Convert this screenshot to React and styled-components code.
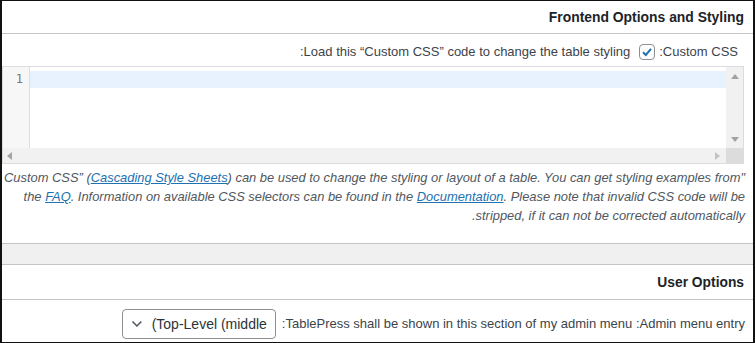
import React from "react";
import styled, { createGlobalStyle } from "styled-components";

const GlobalStyle = createGlobalStyle`
  html, body {
    margin: 0;
    padding: 0;
    background: #fff;
  }
  body {
    font-family: "Liberation Sans", Arial, sans-serif;
    color: #3c434a;
  }
`;

const Frame = styled.div`
  width: 755px;
  height: 343px;
  box-sizing: border-box;
  border: 1px solid #111;
  border-left-width: 2px;
  border-right-width: 2px;
  background: #fff;
  overflow: hidden;
  display: flex;
  flex-direction: column;
`;

const SectionHeader = styled.div`
  height: ${(p) => p.$height}px;
  flex: none;
  display: flex;
  align-items: center;
  justify-content: flex-end;
  padding-right: 9px;
  border-bottom: 1px solid #c3c4c7;
  font-size: ${(p) => p.$size}px;
  font-weight: bold;
  color: #1d2327;
  white-space: nowrap;
  box-sizing: border-box;
`;

const OptionRow = styled.div`
  height: ${(p) => p.$height}px;
  flex: none;
  display: flex;
  align-items: center;
  justify-content: flex-end;
  padding: ${(p) => p.$top}px ${(p) => p.$right}px 0 0;
  font-size: 13px;
  color: #3c434a;
  white-space: nowrap;
  box-sizing: border-box;
`;

const Check = styled.span`
  flex: none;
  width: 14px;
  height: 14px;
  margin: 0 4px 0 9px;
  border: 1px solid #8c8f94;
  border-radius: 4px;
  display: inline-flex;
  align-items: center;
  justify-content: center;
  background: #fff;
`;

const Editor = styled.div`
  flex: none;
  height: 98px;
  margin-right: 9px;
  border: 1px solid #dcdcde;
  display: grid;
  grid-template-columns: 27px 1fr 17px;
  grid-template-rows: 1fr 15px;
  box-sizing: border-box;
`;

const Gutter = styled.div`
  background: #f7f7f7;
  border-right: 1px solid #ddd;
  font-family: "DejaVu Sans Mono", monospace;
  font-size: 12px;
  color: #777;
  text-align: right;
  padding: 4px 6px 0 0;
  line-height: 17px;
`;

const Code = styled.div`
  padding-top: 4px;
`;

const ActiveLine = styled.div`
  height: 17px;
  background: #e8f2ff;
`;

const VScroll = styled.div`
  background: #f1f1f1;
  display: flex;
  flex-direction: column;
  justify-content: space-between;
  align-items: center;
  padding: 7px 0 6px;
`;

const HScroll = styled.div`
  grid-column: 1 / 3;
  background: #f1f1f1;
  display: flex;
  align-items: center;
  justify-content: space-between;
  padding: 0 6px 0 4px;
`;

const Corner = styled.div`
  background: #dcdcdc;
`;

const Arrow = styled.span`
  width: 0;
  height: 0;
  border: 4px solid transparent;
  ${(p) => p.$dir === "up" && "border-bottom: 5px solid #a3a3a3; border-top: 0;"}
  ${(p) => p.$dir === "down" && "border-top: 5px solid #a3a3a3; border-bottom: 0;"}
  ${(p) => p.$dir === "left" && "border-right: 5px solid #a3a3a3; border-left: 0;"}
  ${(p) => p.$dir === "right" && "border-left: 5px solid #c3c3c3; border-right: 0;"}
`;

const Description = styled.p`
  margin: 0;
  padding: 4px 8px 0 0;
  height: 79px;
  flex: none;
  box-sizing: border-box;
  text-align: right;
  font-style: italic;
  font-size: 12.9px;
  line-height: 19px;
  color: #50575e;
  white-space: nowrap;
`;

const Link = styled.a`
  color: #2271b1;
  text-decoration: underline;
`;

const Band = styled.div`
  height: 22px;
  flex: none;
  box-sizing: border-box;
  background: #f0f0f1;
  border-top: 1px solid #c3c4c7;
  border-bottom: 1px solid #c3c4c7;
`;

const Select = styled.div`
  flex: none;
  height: 30px;
  width: 154px;
  margin-right: 6px;
  box-sizing: border-box;
  border: 1px solid #8c8f94;
  border-radius: 4px;
  display: flex;
  align-items: center;
  gap: 9px;
  padding: 0 8px;
  font-size: 14px;
  color: #2c3338;
`;

export default function App() {
  return (
    <>
      <GlobalStyle />
      <Frame>
        <SectionHeader $height={33} $size={13.9}>
          Frontend Options and Styling
        </SectionHeader>
        <OptionRow $height={32} $top={3} $right={15}>
          <span>:Load this “Custom CSS” code to change the table styling</span>
          <Check>
            <svg width="12" height="12" viewBox="0 0 12 12">
              <path d="M2 6.2 L4.8 9 L10 2.8" fill="none" stroke="#2271b1" strokeWidth="2" />
            </svg>
          </Check>
          <span>:Custom CSS</span>
        </OptionRow>
        <Editor>
          <Gutter>1</Gutter>
          <Code>
            <ActiveLine />
          </Code>
          <VScroll>
            <Arrow $dir="up" />
            <Arrow $dir="down" />
          </VScroll>
          <HScroll>
            <Arrow $dir="left" />
            <Arrow $dir="right" />
          </HScroll>
          <Corner />
        </Editor>
        <Description>
          Custom CSS” (<Link>Cascading Style Sheets</Link>) can be used to change the styling or
          layout of a table. You can get styling examples from"
          <br />
          the <Link>FAQ</Link>. Information on available CSS selectors can be found in the{" "}
          <Link>Documentation</Link>. Please note that invalid CSS code will be
          <br />
          .stripped, if it can not be corrected automatically
        </Description>
        <Band />
        <SectionHeader $height={35} $size={13.8}>
          User Options
        </SectionHeader>
        <OptionRow $height={42} $top={5} $right={8}>
          <Select>
            <svg width="12" height="8" viewBox="0 0 12 8">
              <path d="M1.5 1.5 L6 6 L10.5 1.5" fill="none" stroke="#50575e" strokeWidth="1.6" />
            </svg>
            <span>(Top-Level (middle</span>
          </Select>
          <span>:TablePress shall be shown in this section of my admin menu :Admin menu entry</span>
        </OptionRow>
      </Frame>
    </>
  );
}
